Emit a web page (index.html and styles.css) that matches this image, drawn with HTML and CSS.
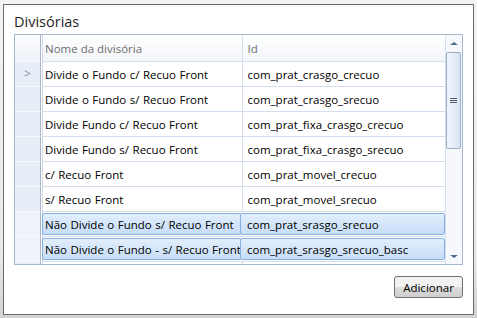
FILE: index.html
```html
<!DOCTYPE html>
<html lang="pt-BR">
<head>
  <meta charset="UTF-8">
  <title>Divisórias</title>
  <link rel="stylesheet" href="styles.css">
</head>
<body>
  <div class="window">
    <div class="title">Divisórias</div>
    <div class="grid">
      <div class="grid-body">
        <div class="row head">
          <div class="rh"></div>
          <div class="c name">Nome da divisória</div>
          <div class="c id">Id</div>
        </div>
        <div class="row">
          <div class="rh current">&gt;</div>
          <div class="c name">Divide o Fundo c/ Recuo Front</div>
          <div class="c id">com_prat_crasgo_crecuo</div>
        </div>
        <div class="row">
          <div class="rh"></div>
          <div class="c name">Divide o Fundo s/ Recuo Front</div>
          <div class="c id">com_prat_crasgo_srecuo</div>
        </div>
        <div class="row">
          <div class="rh"></div>
          <div class="c name">Divide Fundo c/ Recuo Front</div>
          <div class="c id">com_prat_fixa_crasgo_crecuo</div>
        </div>
        <div class="row">
          <div class="rh"></div>
          <div class="c name">Divide Fundo s/ Recuo Front</div>
          <div class="c id">com_prat_fixa_crasgo_srecuo</div>
        </div>
        <div class="row">
          <div class="rh"></div>
          <div class="c name">c/ Recuo Front</div>
          <div class="c id">com_prat_movel_crecuo</div>
        </div>
        <div class="row">
          <div class="rh"></div>
          <div class="c name">s/ Recuo Front</div>
          <div class="c id">com_prat_movel_srecuo</div>
        </div>
        <div class="row selected">
          <div class="rh"></div>
          <div class="c name"><span>Não Divide o Fundo s/ Recuo Front</span></div>
          <div class="c id"><span>com_prat_srasgo_srecuo</span></div>
        </div>
        <div class="row selected">
          <div class="rh"></div>
          <div class="c name"><span>Não Divide o Fundo - s/ Recuo Front</span></div>
          <div class="c id"><span>com_prat_srasgo_srecuo_basc</span></div>
        </div>
        <div class="row">
          <div class="rh"></div>
          <div class="c name"></div>
          <div class="c id"></div>
        </div>
      </div>
      <div class="vscroll">
        <div class="arrow up"></div>
        <div class="thumb"><span class="grip"></span></div>
        <div class="track"></div>
        <div class="arrow down"></div>
      </div>
    </div>
    <div class="actions">
      <button class="btn">Adicionar</button>
    </div>
  </div>
</body>
</html>
```

FILE: styles.css
```css
body {
  margin: 0;
  height: 318px;
  box-sizing: border-box;
  padding: 4px 3px 3px 3px;
  background: linear-gradient(#f3f3f3, #e9e9e9 80%, #d2d2d2);
  font-family: "Open Sans", "Noto Sans", sans-serif;
}
.window {
  height: 311px;
  box-sizing: border-box;
  border: 1px solid #6b6b6b;
  background: #fff;
  padding: 0 10px;
}
.title {
  height: 29px;
  box-sizing: border-box;
  padding-top: 8px;
  font-size: 14.5px;
  color: #1e1e1e;
  line-height: 18px;
}
.grid {
  display: flex;
  height: 231px;
  box-sizing: border-box;
  border: 1px solid #a7b8d0;
  overflow: hidden;
}
.grid-body {
  width: 431px;
  overflow: hidden;
}
.row {
  display: flex;
  height: 25px;
  box-sizing: border-box;
  border-bottom: 1px solid #d3dfef;
  font-size: 11.5px;
  word-spacing: 0.5px;
  color: #000;
}
.row .rh {
  width: 25px;
  flex: none;
  background: #e8eef7;
  border-bottom: 1px solid #f7f9fc;
  margin-bottom: -1px;
  border-right: 1px solid #a9b5c6;
  box-shadow: 1px 0 0 #fff, 2px 0 0 #ced8e6;
  margin-right: 2px;
  color: #8595ab;
  font-size: 12px;
  text-align: center;
  line-height: 24px;
}
.row .c {
  display: flex;
  align-items: center;
  box-sizing: border-box;
  white-space: nowrap;
  overflow: hidden;
}
.row .name {
  width: 200px;
  padding-left: 2px;
  border-right: 1px solid #d3dfef;
}
.row .id {
  width: 203px;
  padding-left: 5px;
}
.row.head {
  height: 27px;
  background: linear-gradient(#ffffff, #f2f5fa);
  color: #6d6d6d;
  word-spacing: 0;
}
.row.head .rh {
  background: linear-gradient(#fbfcfe, #eef2f8);
}
.row.selected .rh {
  background: #f0f4fa;
}
.row.selected .c {
  padding: 1px 0;
  overflow: visible;
}
.row.selected .name {
  border-right-color: transparent;
}
.row.selected .c span {
  display: flex;
  align-items: center;
  height: 100%;
  flex: none;
  overflow: hidden;
  box-sizing: border-box;
  border: 1px solid #86b0e2;
  border-radius: 2px;
  background: linear-gradient(#e2eefc, #c6ddf7);
}
.row.selected .name span {
  margin-left: -1px;
  width: 199px;
  padding-left: 2px;
}
.row.selected .id span {
  margin-left: -2px;
  width: 205px;
  padding-left: 6px;
}
.vscroll {
  width: 17px;
  flex: none;
  display: flex;
  flex-direction: column;
  border-left: 1px solid #d3dfef;
  background: #f6f8fb;
  box-sizing: border-box;
}
.arrow {
  height: 17px;
  flex: none;
  position: relative;
}
.arrow::after {
  content: "";
  position: absolute;
  left: 4px;
  border-left: 4px solid transparent;
  border-right: 4px solid transparent;
}
.arrow.up::after {
  top: 7px;
  border-bottom: 3px solid #4e6b8f;
}
.arrow.down::after {
  top: 8px;
  border-top: 3px solid #4e6b8f;
}
.thumb {
  height: 97px;
  margin: 0 1px 0 0;
  box-sizing: border-box;
  border: 1px solid #9cadc5;
  border-radius: 2px;
  background: linear-gradient(90deg, #f2f6fc, #d9e4f3);
  display: flex;
  align-items: center;
  justify-content: center;
}
.grip {
  width: 7px;
  height: 5px;
  border-top: 1px solid #4f5d70;
  border-bottom: 1px solid #4f5d70;
  box-sizing: border-box;
  position: relative;
}
.grip::after {
  content: "";
  position: absolute;
  left: 0;
  right: 0;
  top: 1px;
  border-top: 1px solid #4f5d70;
}
.track {
  flex: 1;
}
.actions {
  display: flex;
  justify-content: flex-end;
  padding-top: 11px;
}
.btn {
  width: 69px;
  height: 22px;
  border: 1px solid #707070;
  border-radius: 3px;
  background: linear-gradient(#f2f2f2 50%, #dddddd 50%, #cfcfcf);
  font-family: "Open Sans", "Noto Sans", sans-serif;
  font-size: 11.5px;
  color: #000;
  padding: 0;
}
```
